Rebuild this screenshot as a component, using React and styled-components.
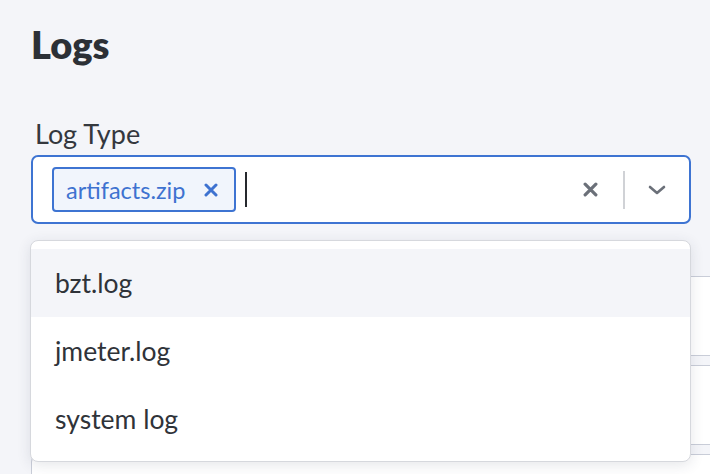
import React from 'react'
import styled, { createGlobalStyle } from 'styled-components'

const GlobalStyle = createGlobalStyle`
  html, body {
    margin: 0;
    padding: 0;
    background: #f4f5f9;
    font-family: Lato, "Noto Sans", sans-serif;
    color: #2f3339;
    overflow: hidden;
  }
`

const Page = styled.div`
  width: 760px;
  padding: 21px 0 0 31px;
  box-sizing: border-box;
`

const Title = styled.h1`
  margin: 0;
  font-size: 38px;
  font-weight: 800;
  line-height: 46px;
  color: #2c3036;
`

const Field = styled.div`
  position: relative;
  margin-top: 52px;
  width: 660px;
`

const Label = styled.div`
  font-size: 27px;
  line-height: 30px;
  padding-left: 4px;
  margin-bottom: 6px;
  color: #34383e;
`

const Control = styled.div`
  height: 69px;
  box-sizing: border-box;
  border: 2px solid #3e74d2;
  border-radius: 7px;
  background: #fff;
  display: flex;
  align-items: center;
  padding-left: 19px;
`

const Chip = styled.div`
  height: 45px;
  box-sizing: border-box;
  border: 2px solid #3e74d2;
  border-radius: 4px;
  background: #f1f5fc;
  display: flex;
  align-items: center;
  padding: 0 16px 0 12px;
  gap: 19px;
  color: #3e72d0;
  font-size: 23.5px;
`

const Caret = styled.div`
  width: 2px;
  height: 35px;
  background: #26292e;
  margin-left: 9px;
`

const Spacer = styled.div`
  flex: 1;
`

const Indicators = styled.div`
  display: flex;
  align-items: center;
  height: 100%;
`

const IconButton = styled.div`
  display: flex;
  align-items: center;
  justify-content: center;
  width: ${p => p.$w}px;
  height: 100%;
`

const Separator = styled.div`
  width: 2px;
  height: 38px;
  background: #d0d2d6;
`

const Menu = styled.div`
  position: absolute;
  top: 121px;
  left: -1px;
  width: 661px;
  box-sizing: border-box;
  background: #fff;
  border: 1px solid #d6d8dd;
  border-radius: 8px;
  box-shadow: 0 3px 14px rgba(40, 50, 70, 0.12);
  padding: 8px 0;
  z-index: 2;
`

const Option = styled.div`
  height: 68px;
  display: flex;
  align-items: center;
  padding-left: 24px;
  font-size: 26.5px;
  color: #2f3339;
  background: ${p => (p.$active ? '#f4f5f9' : '#fff')};
`

const Rows = styled.div`
  margin-top: 52px;
  display: flex;
  flex-direction: column;
  gap: 9px;
`

const Row = styled.div`
  height: 80px;
  box-sizing: border-box;
  width: 740px;
  background: #fff;
  border: 1px solid #c9cdd8;
  border-right: none;
  border-radius: 8px 0 0 8px;
`

const SmallX = ({ color, size, weight }) => (
  <svg width={size} height={size} viewBox="0 0 14 14">
    <path d="M2 2 L12 12 M12 2 L2 12" stroke={color} strokeWidth={weight} strokeLinecap="round" />
  </svg>
)

const Chevron = () => (
  <svg width="18" height="10" viewBox="0 0 18 10">
    <path d="M2 2 L9 8 L16 2" fill="none" stroke="#6b7079" strokeWidth="2.6" strokeLinecap="round" strokeLinejoin="round" />
  </svg>
)

export default function App() {
  const options = ['bzt.log', 'jmeter.log', 'system log']
  return (
    <Page>
      <GlobalStyle />
      <Title>Logs</Title>
      <Field>
        <Label>Log Type</Label>
        <Control>
          <Chip>
            artifacts.zip
            <SmallX color="#3e72d0" size={14} weight={3} />
          </Chip>
          <Caret />
          <Spacer />
          <Indicators>
            <IconButton $w={66}>
              <SmallX color="#6b7079" size={15} weight={3} />
            </IconButton>
            <Separator />
            <IconButton $w={64}>
              <Chevron />
            </IconButton>
          </Indicators>
        </Control>
        <Menu>
          {options.map((o, i) => (
            <Option key={o} $active={i === 0}>{o}</Option>
          ))}
        </Menu>
      </Field>
      <Rows>
        <Row />
        <Row />
        <Row />
      </Rows>
    </Page>
  )
}
